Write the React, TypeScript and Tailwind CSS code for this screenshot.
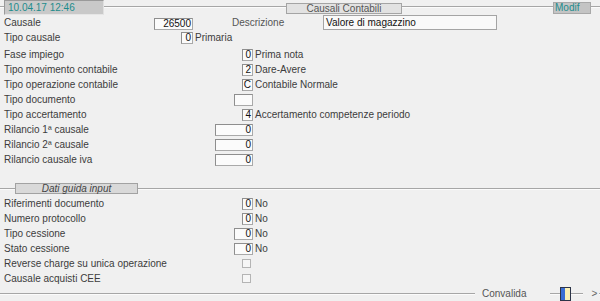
import React from "react";

function Line({ className = "" }: { className?: string }) {
  return <div className={"h-[2px] border-t border-[#a6a6a6] border-b border-b-[#fbfbfb] " + className} />;
}

function Box({ value, w, align = "right" }: { value?: string; w: string; align?: string }) {
  return (
    <div
      className={
        "h-[12px] bg-[#fbfbfb] border border-[#a9a9a9] border-t-[#8e8e8e] border-l-[#8e8e8e] flex items-center text-[#111] px-[1px] " +
        w +
        (align === "right" ? " justify-end" : " justify-start")
      }
    >
      {value}
    </div>
  );
}

function Check() {
  return <div className="w-[9px] h-[9px] bg-[#f6f6f6] border border-[#b4b4b4] mr-[2px]" />;
}

function Row({
  label,
  col = "w-[249px]",
  children,
  desc,
}: {
  label: string;
  col?: string;
  children?: React.ReactNode;
  desc?: string;
}) {
  return (
    <div className="flex items-center h-[15px]">
      <div className={"flex items-center " + col}>
        <span className="whitespace-nowrap">{label}</span>
        <div className="ml-auto flex items-center">{children}</div>
      </div>
      {desc && <span className="ml-[2px] whitespace-nowrap">{desc}</span>}
    </div>
  );
}

export default function App() {
  return (
    <div className="w-[600px] h-[301px] bg-[#f0f0f0] overflow-hidden flex flex-col text-[10px] leading-none text-[#3c3c3c] font-['Liberation_Sans',Arial,sans-serif]">
      {/* header */}
      <div className="flex items-start h-[15px]">
        <div className="w-[4px] mt-[6px]"><Line /></div>
        <div className="w-[100px] h-[15px] bg-[#c9c9c9] border border-[#9a9a9a] border-b-[#e6e6e6] border-r-[#e0e0e0] text-[#1d8c8c] pl-[3px] flex items-center">
          10.04.17 12:46
        </div>
        <div className="w-[182px] mt-[6px]"><Line /></div>
        <div className="w-[116px] h-[11px] mt-[3px] bg-[#e2e2e2] border border-[#a4a4a4] flex items-center justify-center text-[#555]">
          Causali Contabili
        </div>
        <div className="w-[151px] mt-[6px]"><Line /></div>
        <div className="w-[38px] h-[12px] mt-[2px] bg-[#c4c4c4] border border-[#a8a8a8] flex items-center pl-[1px] text-[#1d8c8c]">
          Modif
        </div>
        <div className="flex-1 mt-[6px]"><Line /></div>
      </div>

      {/* upper section */}
      <div className="pl-[4px] flex flex-col">
        <div className="flex items-center h-[15px]">
          <div className="flex items-center w-[189px]">
            <span>Causale</span>
            <div className="ml-auto mt-[3px]">
              <Box value="26500" w="w-[39px]" />
            </div>
          </div>
          <span className="ml-[39px] w-[91px] text-[#555]">Descrizione</span>
          <div className="w-[174px] h-[15px] bg-[#f9f9f9] border border-[#a4a4a4] flex items-center pl-[2px] text-[#111]">
            Valore di magazzino
          </div>
        </div>
        <Row label="Tipo causale" col="w-[189px]" desc="Primaria">
          <Box value="0" w="w-[12px]" />
        </Row>
        <div className="h-[2px]" />
        <Row label="Fase impiego" desc="Prima nota">
          <Box value="0" w="w-[11px]" />
        </Row>
        <Row label="Tipo movimento contabile" desc="Dare-Avere">
          <Box value="2" w="w-[11px]" />
        </Row>
        <Row label="Tipo operazione contabile" desc="Contabile Normale">
          <Box value="C" w="w-[11px]" />
        </Row>
        <Row label="Tipo documento">
          <Box w="w-[19px]" />
        </Row>
        <Row label="Tipo accertamento" desc="Accertamento competenze periodo">
          <Box value="4" w="w-[11px]" />
        </Row>
        <Row label="Rilancio 1ª causale">
          <Box value="0" w="w-[38px]" />
        </Row>
        <Row label="Rilancio 2ª causale">
          <Box value="0" w="w-[38px]" />
        </Row>
        <Row label="Rilancio causale iva">
          <Box value="0" w="w-[38px]" />
        </Row>
      </div>

      {/* section header */}
      <div className="mt-[16px] flex items-center h-[11px]">
        <div className="w-[15px]"><Line /></div>
        <div className="w-[123px] h-[11px] bg-[#d9d9d9] border border-[#a2a2a2] flex items-center justify-center italic text-[#444]">
          Dati guida input
        </div>
        <div className="flex-1"><Line /></div>
      </div>

      {/* lower section */}
      <div className="pl-[4px] mt-[2px] flex flex-col">
        <Row label="Riferimenti documento" desc="No">
          <Box value="0" w="w-[11px]" />
        </Row>
        <Row label="Numero protocollo" desc="No">
          <Box value="0" w="w-[11px]" />
        </Row>
        <Row label="Tipo cessione" desc="No">
          <Box value="0" w="w-[19px]" />
        </Row>
        <Row label="Stato cessione" desc="No">
          <Box value="0" w="w-[19px]" />
        </Row>
        <Row label="Reverse charge su unica operazione">
          <Check />
        </Row>
        <Row label="Causale acquisti CEE">
          <Check />
        </Row>
      </div>

      {/* footer */}
      <div className="flex items-center h-[15px]">
        <div className="w-[475px]"><Line /></div>
        <span className="ml-[7px] text-[#555]">Convalida</span>
        <div className="ml-[24px] w-[10px]"><Line /></div>
        <div className="w-[11px] h-[14px] border border-[#2c3448] flex">
          <div className="w-[4px] bg-[#3b6fd4]" />
          <div className="flex-1 bg-[#fbf1b6]" />
        </div>
        <div className="w-[12px]"><Line /></div>
        <span className="ml-[8px] text-[#666]">&gt;</span>
        <div className="flex-1 ml-[2px]"><Line /></div>
      </div>
    </div>
  );
}
